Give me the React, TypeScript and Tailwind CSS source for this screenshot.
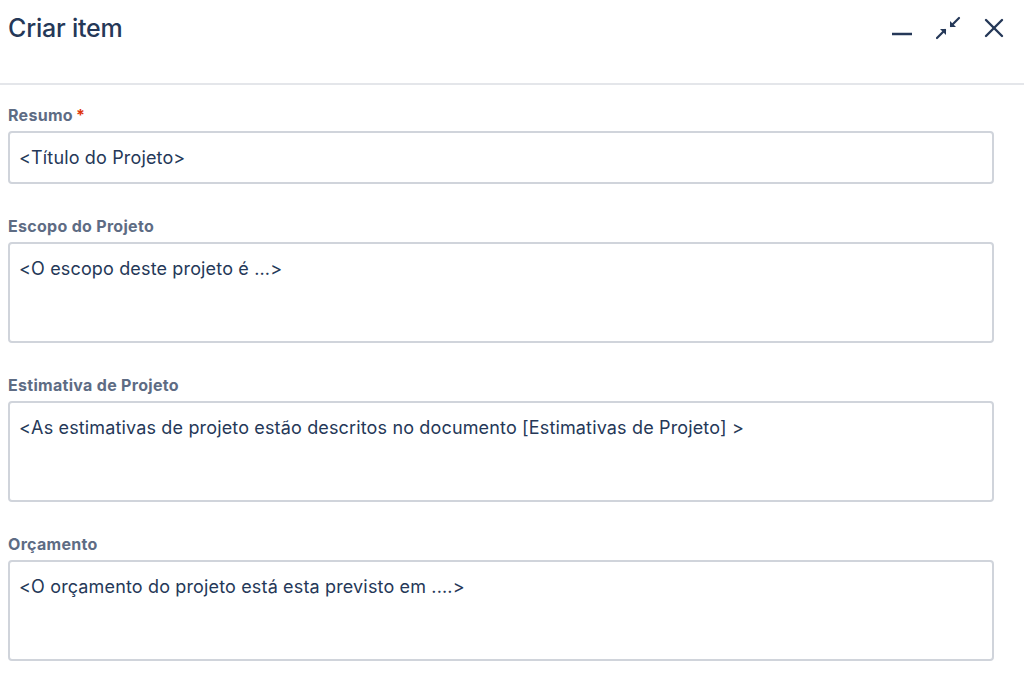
import { ReactNode } from "react"

const font = { fontFamily: "Inter, 'Noto Sans', sans-serif" }

function Field({ label, required, tall, children }: { label: string; required?: boolean; tall?: boolean; children: ReactNode }) {
   return (
      <div className="flex flex-col">
         <div className="flex h-5 items-center text-[16px] font-bold leading-5 tracking-[0.3px] text-[#5e6c84]">
            {label}
            {required && <span className="ml-[3px] text-[#de350b]">*</span>}
         </div>
         <div
            className={
               tall
                  ? "mt-[6px] h-[101px] rounded-[4px] border-2 border-[#d0d4db] px-[9px] pt-[13px] text-[18px] leading-6 tracking-[0.15px] text-[#253858]"
                  : "mt-[6px] h-[53px] rounded-[4px] border-2 border-[#d0d4db] px-[9px] pt-[13px] text-[18px] leading-6 tracking-[0.15px] text-[#253858]"
            }
         >
            {children}
         </div>
      </div>
   )
}

export default function App() {
   return (
      <div className="h-[682px] w-[1024px] overflow-hidden bg-white" style={font}>
         <div className="flex h-[85px] items-start justify-between border-b-2 border-[#e4e6ea] pl-2 pr-5 pt-[12px]">
            <h1 className="text-[25px] font-medium leading-8 tracking-[-0.2px] text-[#253858]">Criar item</h1>
            <div className="mt-[4px] flex items-center gap-[22px] text-[#253858]">
               <svg width="22" height="22" viewBox="0 0 22 22">
                  <line x1="0" y1="17" x2="20" y2="17" stroke="currentColor" strokeWidth="2.5" />
               </svg>
               <svg width="26" height="24" viewBox="0 0 26 24" fill="none" stroke="currentColor" strokeWidth="2.2" strokeLinecap="round">
                  <line x1="1" y1="22" x2="9" y2="14" />
                  <path d="M4 13 L10 13 L10 19 Z" fill="currentColor" stroke="none" />
                  <line x1="23" y1="2" x2="15" y2="10" />
                  <path d="M20 11 L14 11 L14 5 Z" fill="currentColor" stroke="none" />
               </svg>
               <svg width="20" height="20" viewBox="0 0 20 20" stroke="currentColor" strokeWidth="2.4" strokeLinecap="round">
                  <line x1="2" y1="2" x2="18" y2="18" />
                  <line x1="18" y1="2" x2="2" y2="18" />
               </svg>
            </div>
         </div>
         <div className="flex w-[994px] flex-col gap-[32px] pl-2 pt-[20px]">
            <Field label="Resumo" required>
               &lt;Título do Projeto&gt;
            </Field>
            <Field label="Escopo do Projeto" tall>
               &lt;O escopo deste projeto é ...&gt;
            </Field>
            <Field label="Estimativa de Projeto" tall>
               &lt;As estimativas de projeto estão descritos no documento [Estimativas de Projeto] &gt;
            </Field>
            <Field label="Orçamento" tall>
               &lt;O orçamento do projeto está esta previsto em ....&gt;
            </Field>
         </div>
      </div>
   )
}
